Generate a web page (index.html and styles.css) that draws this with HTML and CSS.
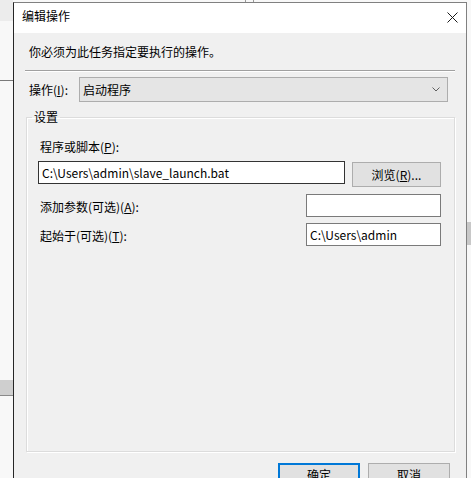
FILE: index.html
```html
<!DOCTYPE html>
<html lang="zh-CN">
<head>
<meta charset="utf-8">
<title>编辑操作</title>
<link rel="stylesheet" href="styles.css">
</head>
<body>
<div class="bg-bit bg-topleft"></div>
<div class="bg-bit bg-line"></div>
<div class="bg-bit bg-block"></div>
<div class="bg-bit bg-right"></div>
<div class="bg-bit bg-top1"></div>
<div class="bg-bit bg-top2"></div>

<div class="dialog">
  <div class="titlebar">
    <span class="title">编辑操作</span>
    <svg class="close" width="11" height="11" viewBox="0 0 11 11"><path d="M0.5 0.5L10.5 10.5M10.5 0.5L0.5 10.5" stroke="#1a1a1a" stroke-width="1" fill="none"/></svg>
  </div>
  <div class="content">
    <p class="intro">你必须为此任务指定要执行的操作。</p>
    <div class="sep"></div>
    <div class="action-row">
      <span class="action-label">操作(<u>I</u>):</span>
      <div class="select">
        <span>启动程序</span>
        <svg class="chevron" width="8" height="5" viewBox="0 0 8 5"><path d="M0.5 0.5L4 4L7.5 0.5" stroke="#606060" stroke-width="1" fill="none"/></svg>
      </div>
    </div>
    <fieldset class="group">
      <legend>设置</legend>
      <div class="field-label">程序或脚本(<u>P</u>):</div>
      <div class="prog-row">
        <div class="input input-wide input-active">C:\Users\admin\slave_launch.bat</div>
        <div class="btn btn-browse">浏览(<u>R</u>)...</div>
      </div>
      <div class="field-row row-args">
        <span class="row-label">添加参数(可选)(<u>A</u>):</span>
        <div class="input input-short"></div>
      </div>
      <div class="field-row row-start">
        <span class="row-label">起始于(可选)(<u>T</u>):</span>
        <div class="input input-short">C:\Users\admin</div>
      </div>
    </fieldset>
    <div class="buttons">
      <div class="btn btn-dialog btn-default">确定</div>
      <div class="btn btn-dialog">取消</div>
    </div>
  </div>
</div>
</body>
</html>
```
FILE: styles.css
```css
* { box-sizing: border-box; }
html, body { margin: 0; }
body {
  width: 471px;
  height: 478px;
  overflow: hidden;
  position: relative;
  background: #f8f8f8;
  font-family: "Noto Sans CJK SC", "Microsoft YaHei", sans-serif;
  font-size: 12px;
  color: #000;
  padding: 2px 0 0 13px;
}
u { text-decoration: underline; text-underline-offset: 1px; }

.bg-bit { position: absolute; }
.bg-topleft { left: 0; top: 0; width: 13px; height: 21px; background: #ececec; }
.bg-line { left: 0; top: 80px; width: 13px; height: 1px; background: #7a7a7a; }
.bg-block { left: 0; top: 380px; width: 13px; height: 16px; background: #cfcfcf; border-bottom: 1px solid #8a8a8a; }
.bg-right { right: 0; top: 222px; width: 4px; height: 23px; background: #c8c8c8; }
.bg-top1 { left: 245px; top: 0; width: 1px; height: 2px; background: #999; }
.bg-top2 { left: 253px; top: 0; width: 1px; height: 2px; background: #999; }

.dialog {
  position: relative;
  z-index: 1;
  width: 454px;
  height: 520px;
  border: 1px solid #808080;
  border-left-color: #262626;
  background: #f0f0f0;
}
.titlebar {
  height: 30px;
  background: #fff;
  display: flex;
  align-items: center;
  justify-content: space-between;
  padding: 0 8px 0 8px;
}
.title { line-height: 16px; margin-top: -4px; }
.close { margin-top: -2px; }

.content { padding: 0 11px; }
.intro { margin: 0; padding: 11px 0 0 4px; line-height: 16px; }
.sep { margin-top: 10px; height: 2px; border-top: 1px solid #a0a0a0; border-bottom: 1px solid #fff; }

.action-row { margin-top: 5px; display: flex; align-items: center; }
.action-label { width: 54px; padding-left: 4px; line-height: 16px; }
.select {
  width: 369px;
  height: 25px;
  border: 1px solid #adadad;
  background: #e5e5e5;
  display: flex;
  align-items: center;
  justify-content: space-between;
  padding: 0 7px 0 3px;
  line-height: 16px;
}

.group {
  margin: 8px 1px 0 1px;
  padding: 0 13px 205px 11px;
  border: 1px solid #dcdcdc;
  box-shadow: inset 1px 1px 0 #fff, 1px 1px 0 #fff;
}
.group legend { margin-left: -6px; padding: 0 2px; line-height: 14px; }

.field-label { margin-top: 15px; padding-left: 2px; line-height: 16px; }
.prog-row { margin-top: 6px; display: flex; align-items: flex-start; gap: 7px; }
.input {
  height: 23px;
  border: 1px solid #7a7a7a;
  background: #fff;
  padding: 0 3px;
  line-height: 21px;
  white-space: nowrap;
  overflow: hidden;
}
.input-active { border-color: #333; }
.input-wide { width: 307px; }
.input-short { width: 135px; }

.btn {
  border: 1px solid #adadad;
  background: #e1e1e1;
  text-align: center;
  line-height: 21px;
}
.btn-browse { width: 89px; height: 25px; margin-top: 1px; line-height: 23px; }

.field-row { display: flex; align-items: flex-start; justify-content: space-between; }
.row-args { margin-top: 7px; }
.row-start { margin-top: 6px; }
.row-label { margin-top: 5px; padding-left: 2px; line-height: 16px; }

.buttons { margin-top: 11px; margin-right: 5px; display: flex; justify-content: flex-end; gap: 8px; }
.btn-dialog { width: 82px; height: 23px; }
.btn-default { border-color: #0078d7; box-shadow: inset 0 0 0 1px #0078d7; }
```
